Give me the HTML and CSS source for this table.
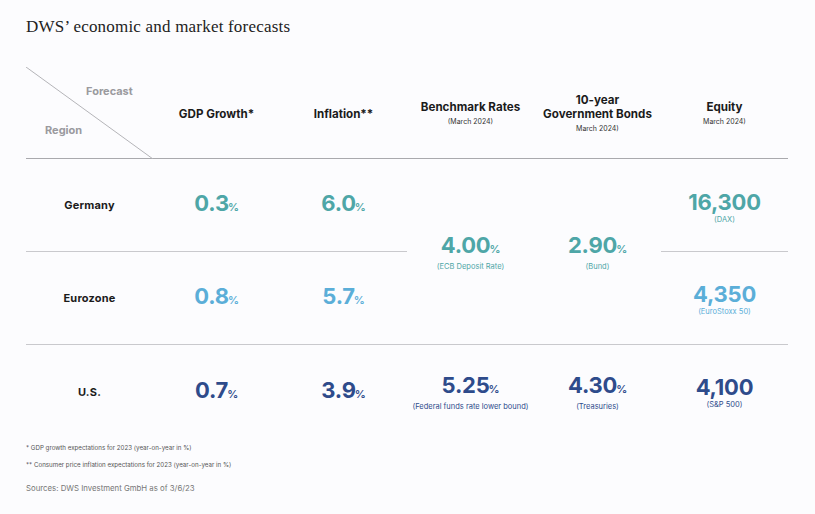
FILE: index.html
```html
<!DOCTYPE html>
<html>
<head>
<meta charset="utf-8">
<link rel="stylesheet" href="styles.css">
</head>
<body>
<div class="page">
  <h1 class="title">DWS’ economic and market forecasts</h1>
  <div class="grid">
    <div class="hd diag">
      <svg class="diag-line" width="127" height="92" viewBox="0 0 127 92"><line x1="0" y1="0" x2="127" y2="92" stroke="#b4b4b8" stroke-width="1"/></svg>
      <span class="lbl lbl-forecast">Forecast</span>
      <span class="lbl lbl-region">Region</span>
    </div>
    <div class="hd"><div class="h">GDP Growth*</div></div>
    <div class="hd"><div class="h">Inflation**</div></div>
    <div class="hd"><div class="h">Benchmark Rates</div><div class="hs">(March 2024)</div></div>
    <div class="hd"><div class="h">10-year<br>Government Bonds</div><div class="hs">March 2024)</div></div>
    <div class="hd"><div class="h">Equity</div><div class="hs">March 2024)</div></div>

    <div class="c line region">Germany</div>
    <div class="c line teal"><span class="v">0.3<small>%</small></span></div>
    <div class="c line teal"><span class="v">6.0<small>%</small></span></div>
    <div class="c span teal"><span class="v">4.00<small>%</small></span><span class="s">(ECB Deposit Rate)</span></div>
    <div class="c span teal"><span class="v">2.90<small>%</small></span><span class="s">(Bund)</span></div>
    <div class="c line teal eq1"><span class="v">16,300</span><span class="s">(DAX)</span></div>

    <div class="c line region">Eurozone</div>
    <div class="c line sky"><span class="v">0.8<small>%</small></span></div>
    <div class="c line sky"><span class="v">5.7<small>%</small></span></div>
    <div class="c line sky eq2"><span class="v">4,350</span><span class="s">(EuroStoxx 50)</span></div>

    <div class="c region">U.S.</div>
    <div class="c navy"><span class="v">0.7<small>%</small></span></div>
    <div class="c navy"><span class="v">3.9<small>%</small></span></div>
    <div class="c navy"><span class="v">5.25<small>%</small></span><span class="s">(Federal funds rate lower bound)</span></div>
    <div class="c navy"><span class="v">4.30<small>%</small></span><span class="s">(Treasuries)</span></div>
    <div class="c navy"><span class="v">4,100</span><span class="s">(S&amp;P 500)</span></div>
  </div>
  <div class="notes">
    <p class="fn">* GDP growth expectations for 2023 (year-on-year in %)</p>
    <p class="fn">** Consumer price inflation expectations for 2023 (year-on-year in %)</p>
    <p class="src">Sources: DWS Investment GmbH as of 3/6/23</p>
  </div>
</div>
</body>
</html>
```

FILE: styles.css
```css
* { box-sizing: border-box; }
html, body { margin: 0; padding: 0; }
body {
  background: #fcfcfe;
  font-family: Inter, "Liberation Sans", sans-serif;
  color: #1e1e1e;
  width: 815px;
  height: 514px;
  overflow: hidden;
}
.page { padding: 17px 0 0 26px; }
.title {
  margin: 0;
  font-family: "Liberation Serif", serif;
  font-weight: normal;
  font-size: 17px;
  line-height: 20px;
  color: #222;
  letter-spacing: 0.2px;
}
.grid {
  margin-top: 30px;
  display: grid;
  grid-template-columns: repeat(6, 127px);
  grid-template-rows: 92px 93px 93px 93px;
}
.hd {
  border-bottom: 1px solid #a9a9ad;
  display: flex;
  flex-direction: column;
  align-items: center;
  justify-content: center;
  text-align: center;
  padding-top: 2px;
}
.h { font-weight: 700; font-size: 11.6px; line-height: 14px; color: #1b1b1b; }
.hs { font-size: 7px; line-height: 11px; color: #333; margin-top: 2px; }
.diag { position: relative; display: block; padding: 0; }
.diag-line { position: absolute; left: 0; top: 0; display: block; }
.lbl { position: absolute; font-size: 11px; font-weight: 700; color: #9a9a9e; line-height: 13px; }
.lbl-forecast { left: 60px; top: 18px; }
.lbl-region { left: 19px; top: 57px; }

.c {
  display: flex;
  flex-direction: column;
  align-items: center;
  justify-content: center;
  text-align: center;
}
.line { border-bottom: 1px solid #c9c9cd; }
.span { grid-row: span 2; border-bottom: 1px solid #c9c9cd; }
.region { font-weight: 700; font-size: 11px; color: #1b1b1b; letter-spacing: 0.2px; }
.v { font-weight: 700; font-size: 22px; line-height: 24px; letter-spacing: -0.2px; }
.v small { font-size: 11px; font-weight: 600; margin-left: -1px; }
.s { font-size: 7.5px; line-height: 9px; margin-top: 1px; }
.teal { color: #4ea6a7; }
.sky { color: #5baed8; }
.navy { color: #2e4b8b; }
.eq1 { grid-column: 6; grid-row: 2; justify-content: flex-start; padding-top: 31px; }
.eq2 { grid-column: 6; grid-row: 3; padding-top: 2px; }
.notes { padding-top: 5px; }
.fn { margin: 0 0 7px; font-size: 6.2px; line-height: 10px; color: #555; }
.src { margin: 12px 0 0; font-size: 7.8px; line-height: 12px; color: #777; }
```
